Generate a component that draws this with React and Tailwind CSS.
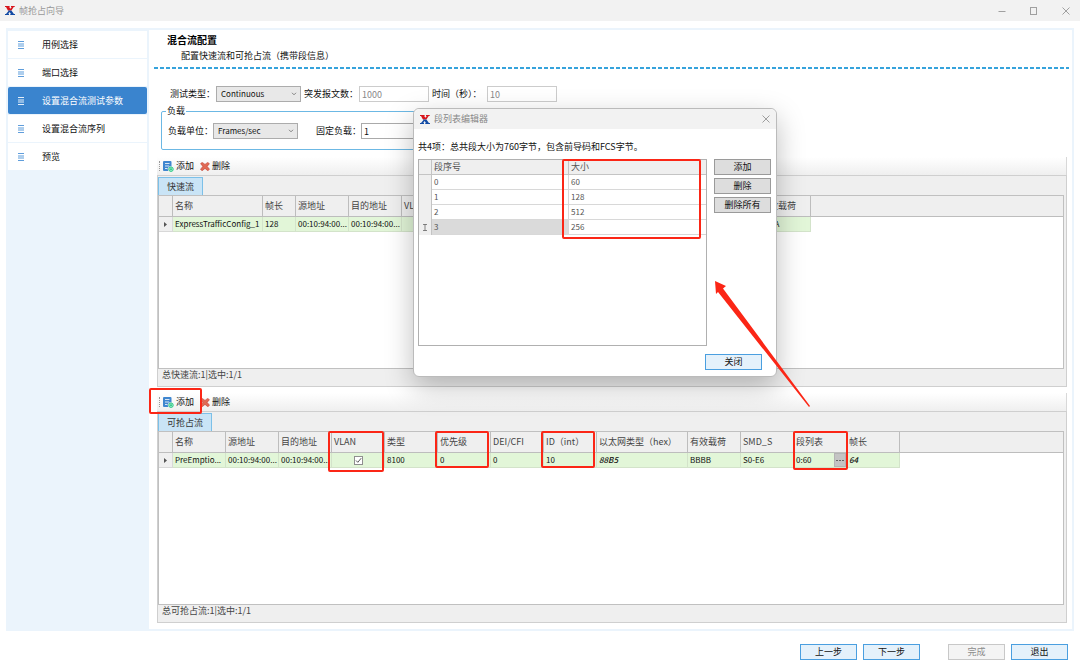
import clsx from "clsx";

const STEPS = ["用例选择", "端口选择", "设置混合流测试参数", "设置混合流序列", "预览"];
const ACTIVE_STEP = 2;

const EXPRESS_COLUMNS = [
  { label: "名称", width: 90, value: "ExpressTrafficConfig_1" },
  { label: "帧长", width: 33, value: "128" },
  { label: "源地址", width: 53, value: "00:10:94:00..." },
  { label: "目的地址", width: 53, value: "00:10:94:00..." },
  { label: "VLAN", width: 53, value: "" },
  { label: "", width: 303, value: "" },
  { label: "有效载荷", width: 53, value: "AAAA" },
];

const PREEMPT_COLUMNS = [
  { label: "名称", width: 53, value: "PreEmptio..." },
  { label: "源地址", width: 53, value: "00:10:94:00..." },
  { label: "目的地址", width: 53, value: "00:10:94:00..." },
  { label: "VLAN", width: 53, type: "check", checked: true, mark: "h-[41px] left-[-4px] w-[56px]" },
  { label: "类型", width: 53, value: "8100" },
  { label: "优先级", width: 53, value: "0", mark: "h-[37px] left-[-3px] w-[54px]" },
  { label: "DEI/CFI", width: 53, value: "0" },
  { label: "ID（int）", width: 53, value: "10", mark: "h-[37px] left-[-3px] w-[54px]" },
  { label: "以太网类型（hex）", width: 91, value: "88B5", italic: true },
  { label: "有效载荷", width: 53, value: "BBBB" },
  { label: "SMD_S", width: 53, value: "S0-E6" },
  { label: "段列表", width: 53, type: "list", value: "0:60", mark: "h-[39px] left-[-1px] w-[55px]" },
  { label: "帧长", width: 53, value: "64", italic: true },
];

const SEGMENTS = [60, 128, 512, 256];

function Logo() {
  return (
    <svg viewBox="0 0 10 9" className="h-[9px] w-[10px] shrink-0" aria-hidden="true">
      <path d="M0 0H4.6V1.1H4.2L5.4 2.8 6.8 1.1H6V0H9.7V1.1H8.7L6.4 4.5H2.9L1 1.1H0Z" fill="#d8141c" />
      <path d="M2.9 4.5H6.4L8.9 7.9H10V9H5.3V7.9H5.9L4.7 6.1 3.2 7.9H4V9H0V7.9H1L3.5 5.1Z" fill="#124ba5" />
    </svg>
  );
}

function MenuIcon({ active }) {
  return (
    <svg viewBox="0 0 6 8" className="h-2 w-1.5 shrink-0" fill={active ? "#e4effa" : "#5f9ddb"} aria-hidden="true">
      <rect y="0" width="6" height="1" />
      <rect y="2.5" width="6" height="1" />
      <rect y="4.5" width="6" height="1" />
      <rect y="7" width="6" height="1" />
    </svg>
  );
}

function AddIcon() {
  return (
    <svg viewBox="0 0 12 12" className="h-3 w-3" aria-hidden="true">
      <path d="M1 2Q1 1 2 1H8.5Q9.5 1 9.5 2V6.4A3 3 0 0 0 6.3 11H2Q1 11 1 10Z" fill="#3f86cf" />
      <path d="M3 3.5H7.5M3 6H7M3 8.5H5.5" stroke="#ffffff" strokeWidth=".8" />
      <circle cx="9" cy="9.2" r="2.2" fill="#e8fff3" stroke="#1cc47c" />
      <path d="M7.6 9.2H10.4M9 7.8V10.6" stroke="#1cc47c" />
    </svg>
  );
}

function DeleteIcon() {
  return (
    <svg viewBox="0 0 10 9" className="h-[9px] w-[10px]" aria-hidden="true">
      <path
        d="M.6 1.6 2.2.4 5 2.4 7.7.4 9.4 1.7 7.2 4.4 9.5 7.3 7.8 8.7 5 6.4 2.2 8.7.5 7.4 2.8 4.4Z"
        fill="#e06a55"
        stroke="#c23b2d"
        strokeWidth=".6"
      />
    </svg>
  );
}

function Combo({ id, value }) {
  return (
    <span className="relative flex">
      <select
        id={id}
        defaultValue={value}
        className="h-4 w-[85px] appearance-none border border-[#acacac] bg-[#e8e8e8] px-1 text-[8px] leading-3 text-[#111]"
      >
        <option>{value}</option>
      </select>
      <svg viewBox="0 0 6 4" className="pointer-events-none absolute top-1.5 right-1 h-1 w-1.5" aria-hidden="true">
        <path d="M1 .8 3 2.8 5 .8" fill="none" stroke="#777" strokeWidth=".9" />
      </svg>
    </span>
  );
}

function Button({ children, tone = "blue", disabled }) {
  return (
    <button
      type="button"
      disabled={disabled}
      className={clsx(
        "h-4 w-[57px] border text-[9px] leading-3",
        disabled && "border-[#c8c8c8] bg-[#f4f4f4] text-[#8c8c8c]",
        !disabled && tone === "blue" && "border-[#4a9fe0] bg-[#e4f1fb] text-[#111]",
        !disabled && tone === "gray" && "border-[#9a9a9a] bg-[#dddddd] text-[#111]"
      )}
    >
      {children}
    </button>
  );
}

function Cell({ column }) {
  if (column.type === "check") {
    return (
      <label className="flex justify-center">
        <input type="checkbox" aria-label={column.label} defaultChecked={column.checked} className="peer sr-only" />
        <span className="flex h-[9px] w-[9px] items-center justify-center border border-[#8f8f8f] bg-white text-transparent peer-checked:text-[#444]">
          <svg viewBox="0 0 7 7" className="h-[7px] w-[7px]" aria-hidden="true">
            <path d="M1 3.5 2.8 5.3 6.2 1.2" fill="none" stroke="currentColor" strokeWidth=".9" />
          </svg>
        </span>
      </label>
    );
  }
  if (column.type === "list") {
    return (
      <div className="flex items-center justify-between">
        {column.value}
        <button
          type="button"
          aria-label="编辑段列表"
          className="flex h-3.5 w-3 items-center justify-center gap-px border border-[#b4b4b4] bg-[#c4c4c4]"
        >
          <span className="h-px w-0.5 bg-[#666]" />
          <span className="h-px w-0.5 bg-[#666]" />
          <span className="h-px w-0.5 bg-[#666]" />
        </button>
      </div>
    );
  }
  return column.value;
}

function StreamPanel({ tab, columns, summary, highlightAdd }) {
  return (
    <section className="flex min-h-0 flex-1 flex-col">
      <div className="flex h-[18px] shrink-0 items-center border-r border-[#d8d8d8] bg-linear-to-b from-white to-[#efefef] text-[9px] text-[#111]">
        <div className="relative flex h-full items-center gap-[3px] pl-[5px]">
          <span className="absolute left-0.5 h-2.5 border-l border-dotted border-[#999]" />
          <button type="button" className="flex items-center gap-0.5">
            <AddIcon />
            添加
          </button>
          {highlightAdd && (
            <span className="pointer-events-none absolute top-[-5px] left-[-8px] z-10 h-[26px] w-[53px] rounded-xs border-2 border-[#fb2616]" />
          )}
        </div>
        <button type="button" className="ml-1.5 flex items-center gap-0.5">
          <DeleteIcon />
          删除
        </button>
      </div>

      <div className="flex min-h-0 flex-1 flex-col border border-[#cfcfcf] bg-[#efefef]">
        <div className="mt-px flex shrink-0">
          <button
            type="button"
            className="h-[18px] border border-b-0 border-[#7cc0e8] bg-[#c9e4f6] px-2 text-[9px] leading-4 text-[#333]"
          >
            {tab}
          </button>
        </div>
        <div className="mr-0.5 min-h-0 flex-1 border border-[#c0c0c0] bg-white">
          <table className="w-full table-fixed border-separate border-spacing-0 text-left text-[#444]">
            <colgroup>
              <col style={{ width: 14 }} />
              {columns.map((c, i) => (
                <col key={i} style={{ width: c.width }} />
              ))}
              <col />
            </colgroup>
            <thead>
              <tr className="h-[21px] bg-[#efefef] text-[9px]">
                <th className="border-r border-b border-[#bdbdbd]" />
                {columns.map((c, i) => (
                  <th
                    key={i}
                    className="relative border-r border-b border-[#bdbdbd] p-0 pl-0.5 leading-3 font-normal whitespace-nowrap"
                  >
                    {c.label}
                    {c.mark && (
                      <span
                        className={clsx(
                          "pointer-events-none absolute top-[-1px] z-10 rounded-xs border-2 border-[#fb2616]",
                          c.mark
                        )}
                      />
                    )}
                  </th>
                ))}
                <th className="border-b border-[#bdbdbd]" />
              </tr>
            </thead>
            <tbody>
              <tr className="h-[15px] text-[8px] text-[#111]">
                <td className="border-r border-b border-[#d8d8d8] bg-[#efefef] p-0">
                  <svg viewBox="0 0 3 5" className="mx-auto h-[5px] w-[3px]" aria-hidden="true">
                    <path d="M0 0 3 2.5 0 5Z" fill="#555" />
                  </svg>
                </td>
                {columns.map((c, i) => (
                  <td
                    key={i}
                    className={clsx(
                      "border-r border-b border-[#d3e3ca] bg-[#e2f6d8] p-0 leading-3 whitespace-nowrap",
                      c.type !== "check" && "pl-0.5",
                      c.italic && "font-medium italic"
                    )}
                  >
                    <Cell column={c} />
                  </td>
                ))}
                <td />
              </tr>
            </tbody>
          </table>
        </div>
        <p className="h-[17px] shrink-0 pl-1 text-[9px] leading-3 text-[#444]">{summary}</p>
      </div>
    </section>
  );
}

function SegmentDialog() {
  return (
    <div
      role="dialog"
      aria-label="段列表编辑器"
      className="absolute top-[108px] left-[413px] z-20 flex h-[269px] w-[364px] flex-col rounded-md border border-[#bbb] bg-white shadow-[0_10px_28px_rgba(0,0,0,0.26)]"
    >
      <header className="flex h-5 shrink-0 items-center gap-1 rounded-t-md bg-[#f2f2f2] px-1.5 text-[9px] text-[#888]">
        <Logo />
        段列表编辑器
        <button type="button" aria-label="关闭窗口" className="ml-auto">
          <svg viewBox="0 0 8 8" className="h-2 w-2" fill="none" stroke="#888" strokeWidth=".8">
            <path d="M.5.5 7.5 7.5M7.5.5.5 7.5" />
          </svg>
        </button>
      </header>
      <p className="mt-3 pl-1 text-[9px] leading-3 text-[#111]">共4项：总共段大小为760字节，包含前导码和FCS字节。</p>
      <div className="mt-1.5 flex min-h-0 flex-1 gap-[7px] pr-[5px] pl-1">
        <div className="relative flex-1 border border-[#b0b0b0] bg-white">
          <table className="w-full table-fixed border-separate border-spacing-0 text-left text-[#555]">
            <colgroup>
              <col style={{ width: 13 }} />
              <col style={{ width: 137 }} />
              <col />
            </colgroup>
            <thead>
              <tr className="h-[15px] bg-[#efefef] text-[9px] leading-3">
                <th className="border-r border-b border-[#c4c4c4] p-0" />
                <th className="border-r border-b border-[#c4c4c4] p-0 pl-0.5 font-normal">段序号</th>
                <th className="border-b border-[#c4c4c4] p-0 pl-0.5 font-normal">大小</th>
              </tr>
            </thead>
            <tbody>
              {SEGMENTS.map((size, i) => (
                <tr key={size} className="h-[15px] text-[8px] leading-3">
                  <td className="border-r border-[#c4c4c4] bg-[#efefef] p-0">
                    {i === SEGMENTS.length - 1 && (
                      <svg viewBox="0 0 4 7" className="mx-auto h-[7px] w-1" fill="none" stroke="#555" strokeWidth=".7">
                        <path d="M0 .5H4M2 .5V6.5M0 6.5H4" />
                      </svg>
                    )}
                  </td>
                  <td
                    className={clsx(
                      "border-r border-b border-[#d8d8d8] p-0 pl-0.5",
                      i === SEGMENTS.length - 1 && "bg-[#dadada]"
                    )}
                  >
                    {i}
                  </td>
                  <td className="border-b border-[#d8d8d8] p-0 pl-0.5">{size}</td>
                </tr>
              ))}
            </tbody>
          </table>
          <span className="pointer-events-none absolute top-[-1px] right-[5px] h-20 w-[139px] rounded-xs border-2 border-[#fb2616]" />
        </div>
        <div className="flex flex-col gap-[3px]">
          <Button tone="gray">添加</Button>
          <Button tone="gray">删除</Button>
          <Button tone="gray">删除所有</Button>
        </div>
      </div>
      <footer className="flex shrink-0 justify-end pt-2 pr-3.5 pb-1.5">
        <Button>关闭</Button>
      </footer>
    </div>
  );
}

export default function App() {
  return (
    <div className="relative flex h-screen flex-col overflow-hidden bg-white font-['Noto_Sans_CJK_SC','Open_Sans',sans-serif] text-[#222]">
      <header className="flex h-[21px] shrink-0 items-center gap-1 bg-[#f2f2f2] pr-2.5 pl-[5px] text-[9px] text-[#999]">
        <Logo />
        帧抢占向导
        <div className="ml-auto flex items-center gap-6 text-[#a0a0a0]">
          <button type="button" aria-label="最小化">
            <svg viewBox="0 0 8 8" className="h-2 w-2" fill="none" stroke="currentColor">
              <path d="M.5 4.5H7.5" />
            </svg>
          </button>
          <button type="button" aria-label="最大化">
            <svg viewBox="0 0 8 8" className="h-2 w-2" fill="none" stroke="currentColor">
              <rect x=".5" y=".5" width="6" height="7" />
            </svg>
          </button>
          <button type="button" aria-label="关闭">
            <svg viewBox="0 0 8 8" className="h-2 w-2" fill="none" stroke="currentColor">
              <path d="M.5.5 7.5 7.5M7.5.5.5 7.5" />
            </svg>
          </button>
        </div>
      </header>

      <div className="mx-1.5 mt-[7px] flex min-h-0 flex-1 border-2 border-l-0 border-[#ebf4fc]">
        <nav className="flex w-[143px] shrink-0 flex-col gap-px bg-[#ebf4fc] px-0.5 pt-px">
          {STEPS.map((step, i) => (
            <button
              key={step}
              type="button"
              className={clsx(
                "flex h-[27px] items-center gap-[18px] pl-2.5 text-[9px]",
                i === ACTIVE_STEP ? "rounded-xs bg-[#3a84ce] text-white" : "bg-white text-[#111]"
              )}
            >
              <MenuIcon active={i === ACTIVE_STEP} />
              {step}
            </button>
          ))}
        </nav>

        <main className="flex min-w-0 flex-1 flex-col pr-[3px] pb-1.5 pl-[5px]">
          <h1 className="mt-1 pl-[13px] text-[10px] leading-3 font-bold text-black">混合流配置</h1>
          <p className="mt-1 pl-[27px] text-[9px] leading-3 text-[#111]">配置快速流和可抢占流（携带段信息）</p>
          <div className="mt-[5px] h-0.5 shrink-0 bg-[repeating-linear-gradient(90deg,#36a3dc_0_4px,transparent_4px_6px)]" />

          <form className="mt-[17px] pl-[7px] text-[9px] leading-3 text-[#111]">
            <div className="flex items-center pl-[9px]">
              <label htmlFor="testType" className="w-[46px] whitespace-nowrap">测试类型：</label>
              <Combo id="testType" value="Continuous" />
              <label htmlFor="burst" className="ml-[3px] w-[55px] whitespace-nowrap">突发报文数：</label>
              <input id="burst" defaultValue="1000" disabled className="h-4 w-[70px] border border-[#ccc] px-0.5 text-[#888]" />
              <label htmlFor="seconds" className="ml-[3px] w-[55px] whitespace-nowrap">时间（秒）：</label>
              <input id="seconds" defaultValue="10" disabled className="h-4 w-[70px] border border-[#ccc] px-0.5 text-[#888]" />
            </div>
            <fieldset className="mt-[3px] flex h-[45px] w-[480px] rounded-xs border border-[#6cb8e4] px-1.5 pt-1.5">
              <legend className="-ml-0.5 px-px leading-3">负载</legend>
              <div className="flex h-4 items-center">
                <label htmlFor="loadUnit" className="w-[45px] whitespace-nowrap">负载单位：</label>
                <Combo id="loadUnit" value="Frames/sec" />
                <label htmlFor="load" className="ml-[18px] w-[45px] whitespace-nowrap">固定负载：</label>
                <input id="load" defaultValue="1" className="h-4 w-[70px] border border-[#aaa] px-0.5" />
              </div>
            </fieldset>
          </form>

          <div className="mt-[7px] flex min-h-0 flex-1 flex-col gap-1.5 pr-0.5 pl-[3px]">
            <StreamPanel tab="快速流" columns={EXPRESS_COLUMNS} summary="总快速流:1|选中:1/1" />
            <StreamPanel tab="可抢占流" columns={PREEMPT_COLUMNS} summary="总可抢占流:1|选中:1/1" highlightAdd />
          </div>
        </main>
      </div>

      <footer className="flex h-[34px] shrink-0 items-center justify-end gap-1.5 pt-3 pr-3 pb-1">
        <Button>上一步</Button>
        <Button>下一步</Button>
        <div className="w-4" />
        <Button disabled>完成</Button>
        <Button>退出</Button>
      </footer>

      <SegmentDialog />

      <svg
        viewBox="0 0 96 126"
        className="pointer-events-none absolute top-[281px] left-[714px] z-30 h-[126px] w-24"
        aria-hidden="true"
      >
        <path d="M1 0 12 5 9 7.5 96 125 95 126 4 11 2 13Z" fill="#fb2616" />
      </svg>
    </div>
  );
}
